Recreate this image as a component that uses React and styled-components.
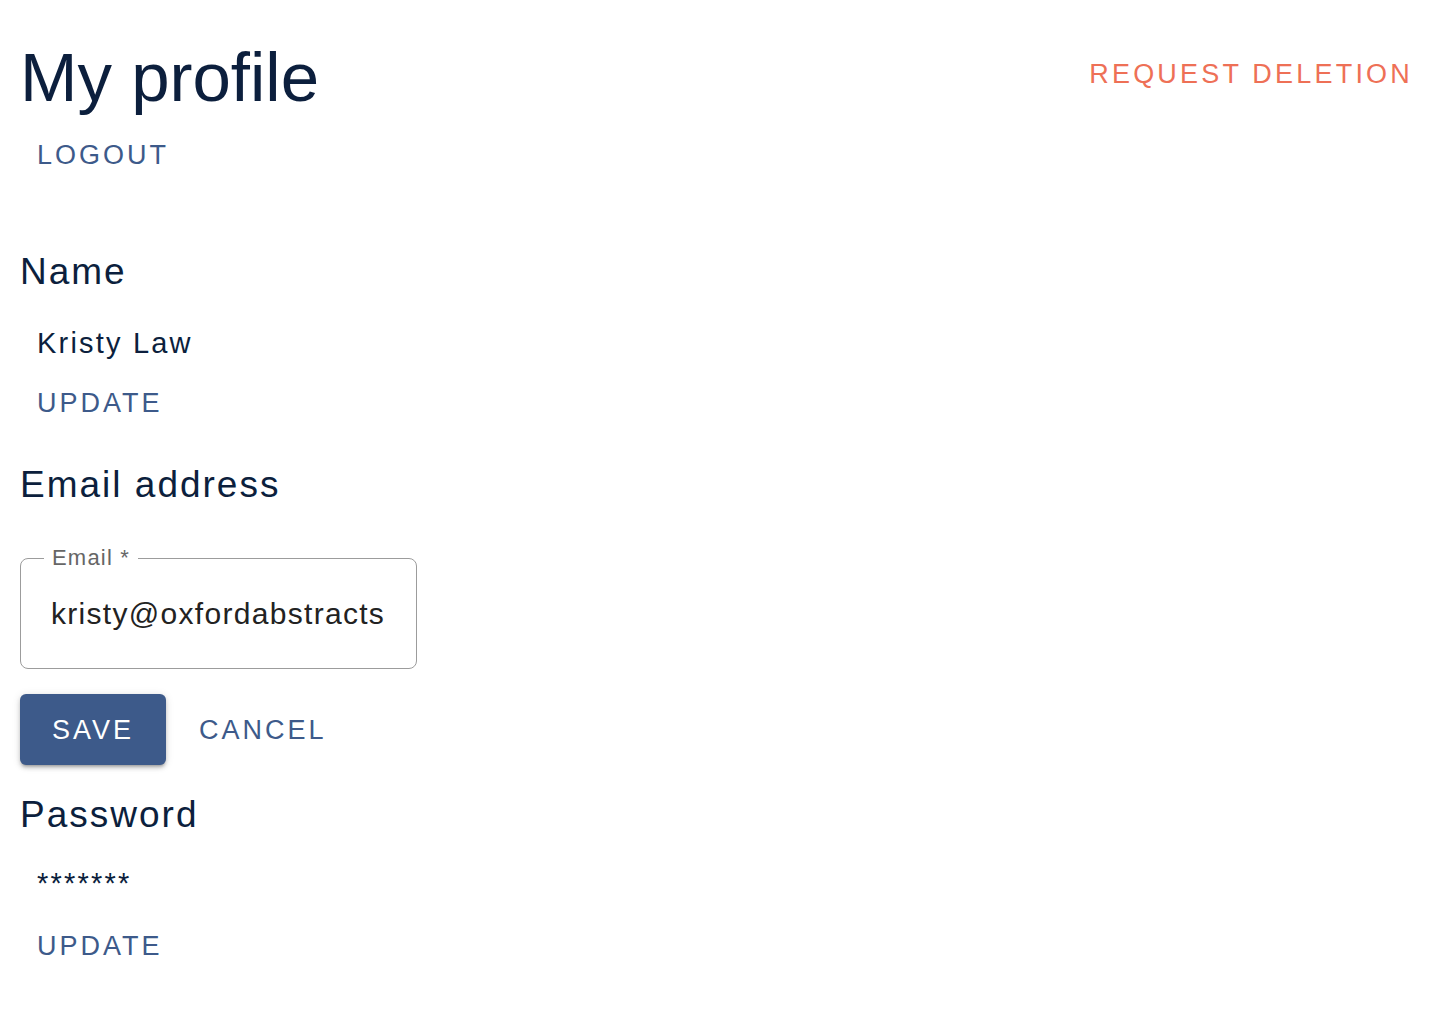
import React from "react";
import styled, { createGlobalStyle } from "styled-components";

const GlobalStyle = createGlobalStyle`
  html, body {
    margin: 0;
    padding: 0;
    background: #ffffff;
    font-family: "Liberation Sans", Arial, Helvetica, sans-serif;
  }
  * { box-sizing: border-box; }
`;

const Page = styled.main`
  padding: 38px 22px 40px 20px;
  display: flex;
  flex-direction: column;
  align-items: flex-start;
`;

const Header = styled.header`
  align-self: stretch;
  display: flex;
  justify-content: space-between;
  align-items: flex-start;
`;

const Title = styled.h1`
  margin: 0;
  font-size: 69px;
  line-height: 80px;
  font-weight: 400;
  letter-spacing: 0;
  color: #0c1f3d;
`;

const TextButton = styled.button`
  border: none;
  background: transparent;
  font-family: inherit;
  font-size: 27px;
  line-height: 36px;
  font-weight: 400;
  letter-spacing: ${(p) => (p.$danger ? 3.2 : 3)}px;
  text-transform: uppercase;
  padding: 6px 17px;
  border-radius: 6px;
  cursor: pointer;
  color: ${(p) => (p.$danger ? "#ee7056" : "#3d5a8a")};
  margin-top: ${(p) => p.$mt || 0}px;
`;

const SectionTitle = styled.h2`
  margin: ${(p) => p.$mt}px 0 0;
  font-size: 37px;
  line-height: 44px;
  font-weight: 400;
  letter-spacing: 2px;
  color: #0c1f3d;
`;

const Value = styled.p`
  margin: ${(p) => p.$mt}px 0 0;
  padding: 0 17px;
  font-size: 29px;
  line-height: 40px;
  letter-spacing: 2.2px;
  color: #0c1f3d;
`;

const Field = styled.div`
  position: relative;
  margin-top: 51px;
  width: 397px;
  height: 111px;
  border: 1.6px solid #9c9c9c;
  border-radius: 8px;
`;

const FieldLabel = styled.label`
  position: absolute;
  top: -14px;
  left: 23px;
  padding: 0 8px;
  background: #ffffff;
  font-size: 22px;
  line-height: 26px;
  letter-spacing: 1.2px;
  color: #666666;
`;

const Input = styled.input`
  display: block;
  width: 100%;
  height: 100%;
  border: none;
  outline: none;
  background: transparent;
  padding: 0 30px;
  font-family: inherit;
  font-size: 30px;
  letter-spacing: 1.3px;
  color: #222222;
`;

const Actions = styled.div`
  display: flex;
  align-items: center;
  gap: 16px;
  margin-top: 25px;
`;

const SaveButton = styled.button`
  border: none;
  background: #3d5a8a;
  color: #ffffff;
  font-family: inherit;
  font-size: 27px;
  line-height: 36px;
  letter-spacing: 3px;
  text-transform: uppercase;
  padding: 17.5px 32px 17.5px 32px;
  border-radius: 6px;
  cursor: pointer;
  box-shadow: 0 3px 3px -2px rgba(0, 0, 0, 0.25), 0 3px 4px rgba(0, 0, 0, 0.16),
    0 1px 8px rgba(0, 0, 0, 0.12);
`;

export default function App() {
  return (
    <>
      <GlobalStyle />
      <Page>
        <Header>
          <Title>My profile</Title>
          <TextButton $danger $mt={12}>Request deletion</TextButton>
        </Header>
        <TextButton $mt={13}>Logout</TextButton>

        <SectionTitle $mt={71}>Name</SectionTitle>
        <Value $mt={29}>Kristy Law</Value>
        <TextButton $mt={16}>Update</TextButton>

        <SectionTitle $mt={36}>Email address</SectionTitle>
        <Field>
          <FieldLabel htmlFor="email">Email *</FieldLabel>
          <Input id="email" readOnly value="kristy@oxfordabstracts.com" />
        </Field>
        <Actions>
          <SaveButton>Save</SaveButton>
          <TextButton>Cancel</TextButton>
        </Actions>

        <SectionTitle $mt={28}>Password</SectionTitle>
        <Value $mt={26}>*******</Value>
        <TextButton $mt={19}>Update</TextButton>
      </Page>
    </>
  );
}
